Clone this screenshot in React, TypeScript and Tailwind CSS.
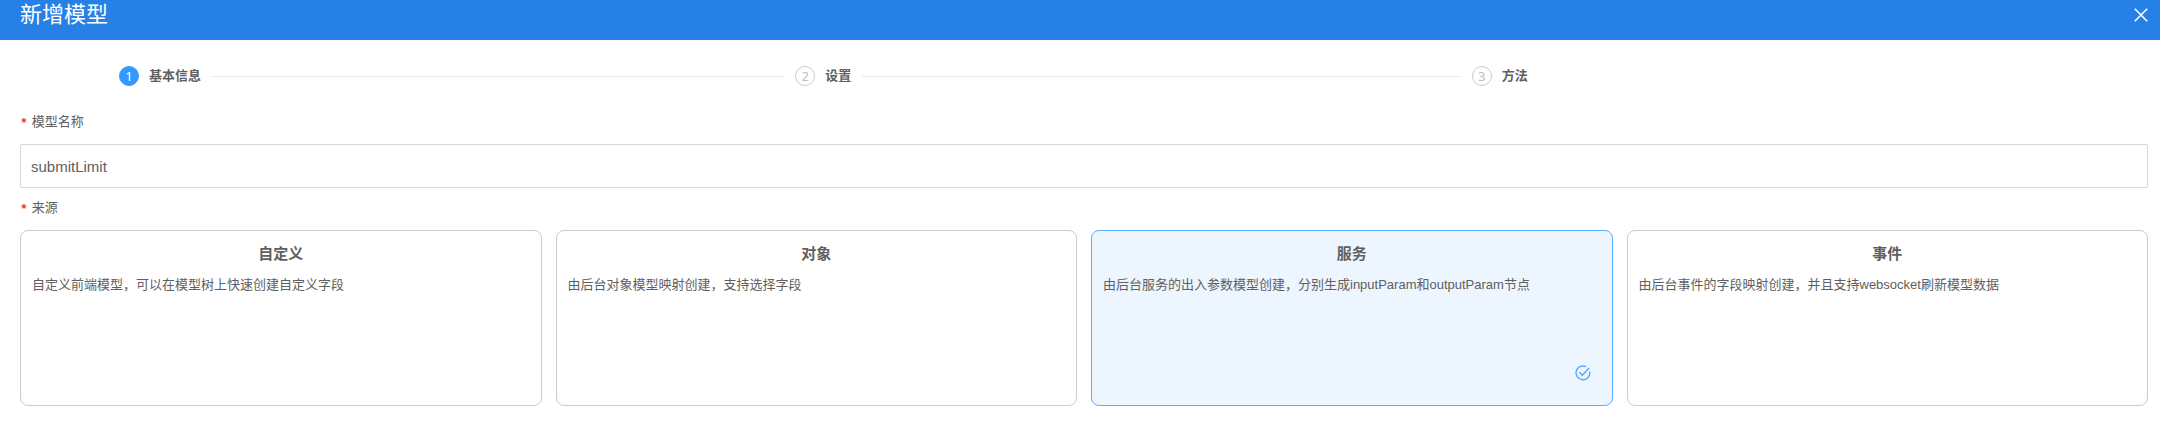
import { useState } from 'react';
import clsx from 'clsx';

type Source = {
  value: string;
  title: string;
  description: string;
};

const STEPS = ['基本信息', '设置', '方法'];

const SOURCES: Source[] = [
  { value: 'custom', title: '自定义', description: '自定义前端模型，可以在模型树上快速创建自定义字段' },
  { value: 'object', title: '对象', description: '由后台对象模型映射创建，支持选择字段' },
  { value: 'service', title: '服务', description: '由后台服务的出入参数模型创建，分别生成inputParam和outputParam节点' },
  { value: 'event', title: '事件', description: '由后台事件的字段映射创建，并且支持websocket刷新模型数据' },
];

function CloseIcon() {
  return (
    <svg className="w-3.5 h-3.5" viewBox="0 0 14 14" fill="none" stroke="currentColor" strokeWidth="1.6" aria-hidden="true">
      <path d="M.8.8l12.4 12.4M13.2.8L.8 13.2" />
    </svg>
  );
}

function CheckedIcon() {
  return (
    <svg className="w-4 h-4" viewBox="0 0 16 16" fill="none" stroke="currentColor" strokeWidth="1.4" strokeLinecap="round" strokeLinejoin="round" aria-hidden="true">
      <path d="M10.6 1.5A6.9 6.9 0 1 0 14.8 7.2" />
      <path d="M4.7 7.6l2.7 2.7 6.5-7" />
    </svg>
  );
}

function RequiredMark() {
  return (
    <span className="mr-1 h-4 font-['Liberation_Mono',monospace] text-[13px] font-bold leading-5 text-[#ed4014]" aria-hidden="true">
      *
    </span>
  );
}

function Steps({ current }: { current: number }) {
  return (
    <ol className="flex pl-[99px]">
      {STEPS.map((title, i) => (
        <li key={title} className="flex flex-1 items-center" aria-current={i === current ? 'step' : undefined}>
          <span
            className={clsx(
              "flex w-5 h-5 shrink-0 items-center justify-center rounded-full border font-['Noto_Sans',sans-serif] text-[13px] leading-none",
              i === current ? 'border-[#3399ff] bg-[#3399ff] text-white' : 'border-[#cccccc] text-[#c0c0c0]',
            )}
          >
            {i + 1}
          </span>
          <span className="ml-2.5 shrink-0 text-[13px] font-bold leading-5">{title}</span>
          {i < STEPS.length - 1 && <span className="mx-[11px] h-px flex-1 bg-[#e8eaec]" />}
        </li>
      ))}
    </ol>
  );
}

export default function App() {
  const [name, setName] = useState('submitLimit');
  const [source, setSource] = useState('service');

  return (
    <div className="bg-white text-[#606060] font-['Liberation_Sans','Noto_Sans_CJK_SC',sans-serif]">
      <header className="flex h-10 items-start justify-between bg-[#2680e6] pl-5 pr-3 text-white">
        <h1 className="text-[22px] leading-[30px]">新增模型</h1>
        <button type="button" className="mt-2 cursor-pointer" aria-label="关闭">
          <CloseIcon />
        </button>
      </header>

      <form className="pl-5 pr-3 pt-[26px]" onSubmit={e => e.preventDefault()}>
        <Steps current={0} />

        {/* Model name */}
        <div className="mt-[26px]">
          <label htmlFor="model-name" className="flex items-center pb-3 text-[13px] leading-5">
            <RequiredMark />模型名称
          </label>
          <input
            id="model-name"
            type="text"
            required
            value={name}
            onChange={e => setName(e.target.value)}
            className="block h-11 w-full rounded-xs border border-[#d7d8d9] bg-white px-2.5 text-[15px] outline-none focus:border-[#57a3f3]"
          />
        </div>

        {/* Source */}
        <fieldset className="mt-2.5">
          <legend className="flex items-center pb-3 text-[13px] leading-5">
            <RequiredMark />来源
          </legend>
          <div className="grid grid-cols-4 gap-3.5">
            {SOURCES.map(item => {
              const selected = item.value === source;
              return (
                <label
                  key={item.value}
                  className={clsx(
                    'relative block min-h-44 cursor-pointer rounded-lg border px-[11px] pt-3',
                    selected ? 'border-[#5cadff] bg-[#edf6fe]' : 'border-[#cccccc] bg-white',
                  )}
                >
                  <input
                    type="radio"
                    name="source"
                    value={item.value}
                    checked={selected}
                    onChange={() => setSource(item.value)}
                    className="sr-only"
                  />
                  <span className="block text-center text-[15px] font-bold leading-[22px]">{item.title}</span>
                  <span className="mt-2.5 block text-[13px] leading-5">{item.description}</span>
                  {selected && (
                    <span className="absolute bottom-6 right-[21px] text-[#5ba6ff]">
                      <CheckedIcon />
                    </span>
                  )}
                </label>
              );
            })}
          </div>
        </fieldset>
      </form>
    </div>
  );
}
